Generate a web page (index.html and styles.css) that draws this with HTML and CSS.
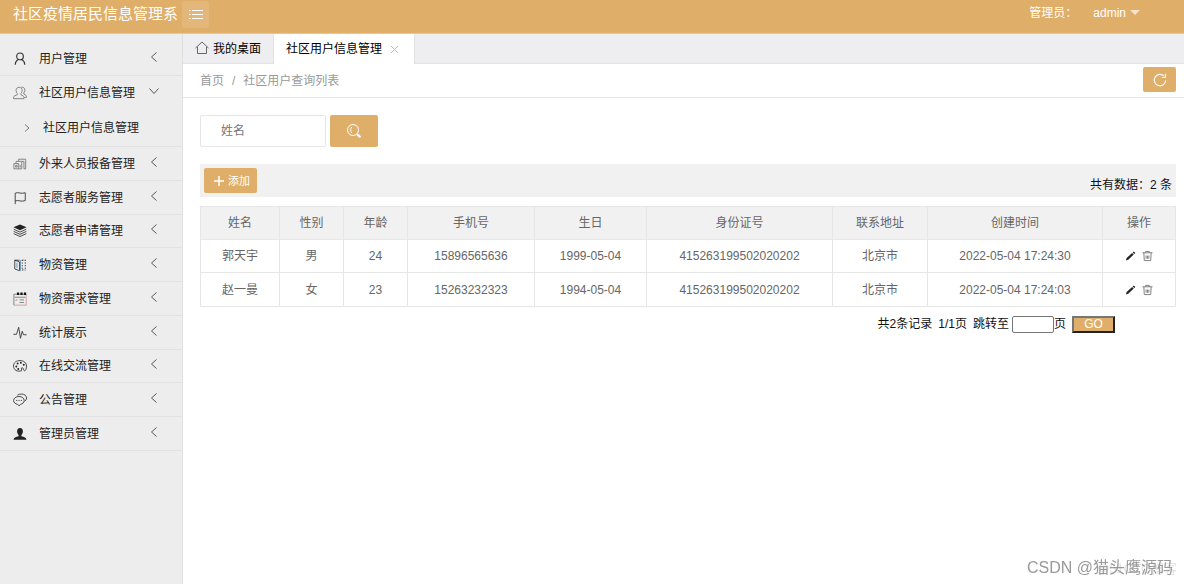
FILE: index.html
```html
<!DOCTYPE html>
<html lang="zh-CN">
<head>
<meta charset="utf-8">
<title>社区疫情居民信息管理系统</title>
<link rel="stylesheet" href="styles.css">
</head>
<body>
<header class="header">
  <div class="logo">社区疫情居民信息管理系</div>
  <button class="toggle" type="button" aria-label="折叠菜单">
    <svg width="16" height="12" viewBox="0 0 16 12" fill="none" stroke="currentColor"><path d="M4 1.500h11M4 5.500h11M4 9.500h11M1 1.500h1.500M1 5.500h1.500M1 9.500h1.500"/></svg>
  </button>
  <div class="account"><span>管理员：</span><button class="user" type="button">admin<span class="caret"></span></button></div>
</header>
<div class="body">
  <nav class="side">
    <ul class="menu">
      <li><a class="item" href="#"><svg class="ic" viewBox="0 0 16 16"><g stroke-width="1.300"><circle cx="8" cy="5" r="3.800"/><path d="M2.500 14.500c.2-3 1.500-5 3.500-6M10 8.500c2 1 3.300 3 3.500 6"/></g></svg><span>用户管理</span><svg class="arrow" viewBox="0 0 10 10"><path d="M7.500.5 2.500 5l5 4.500"/></svg></a></li>
      <li class="open"><a class="item" href="#"><svg class="ic light" viewBox="0 0 16 16"><path d="M7 1.500c-2.200 0-3.500 1.500-3.500 3.700 0 1.500.7 2.600 1.500 3.300v1.300L1.500 11.500C.6 12 .6 13 .6 14.500h12c0-1.500 0-2.500-.9-3L9 9.800V8.500c.8-.7 1.500-1.800 1.500-3.300C10.500 3 9.200 1.500 7 1.500ZM9.500 1.300c2.500-.4 4.100 1.300 4.100 3.500 0 1.400-.5 2.400-1.300 3.200v1.200l2.300 1.300c.9.500.9 1.500.9 2.500h-2.500"/></svg><span>社区用户信息管理</span><svg class="arrow" viewBox="0 0 10 10"><path d="M.5 2.500 5 7.500l4.500-5"/></svg></a>
        <ul class="sub"><li><a class="subitem" href="#"><svg class="tiny" viewBox="0 0 8 8"><path d="m2 .5 4 3.500-4 3.500"/></svg><span>社区用户信息管理</span></a></li></ul></li>
      <li><a class="item" href="#"><svg class="ic light" viewBox="0 0 16 16"><path d="M1 13.500V7.500h5.500v6ZM3.500 7.500V5H10v8.500H6.500M6.500 5V2.500h8v11H12.500V5H10M3 9.500h1.800v2H3zM8.200 9v3"/></svg><span>外来人员报备管理</span><svg class="arrow" viewBox="0 0 10 10"><path d="M7.500.5 2.500 5l5 4.500"/></svg></a></li>
      <li><a class="item" href="#"><svg class="ic" viewBox="0 0 16 16"><path d="M2.500 15V2.500c3.500-2 6.500 1.500 11.500-.5v9c-5 2-8-1.500-11.500.5"/></svg><span>志愿者服务管理</span><svg class="arrow" viewBox="0 0 10 10"><path d="M7.500.5 2.500 5l5 4.500"/></svg></a></li>
      <li><a class="item" href="#"><svg class="ic" viewBox="0 0 16 16"><path class="solid" d="m8 .5 7.500 3.200L8 7.200.5 3.700Z"/><path d="m.8 6 7.200 3.300L15.200 6M.8 8.500 8 11.800l7.200-3.300M.8 11 8 14.300l7.200-3.300"/></svg><span>志愿者申请管理</span><svg class="arrow" viewBox="0 0 10 10"><path d="M7.500.5 2.500 5l5 4.500"/></svg></a></li>
      <li><a class="item" href="#"><svg class="ic" viewBox="0 0 16 16"><path d="M2 2.500v10l5.500 2V4.500L2 2.500h5.500"/><path class="blue" d="M4.500 5.500v6M8.500 2.500v12"/><path stroke-dasharray="1.500 1.500" d="M10.500 2v12.500M14 2v12.500M10.500 2.500H14M10.500 13.500H14"/></svg><span>物资管理</span><svg class="arrow" viewBox="0 0 10 10"><path d="M7.500.5 2.500 5l5 4.500"/></svg></a></li>
      <li><a class="item" href="#"><svg class="ic light" viewBox="0 0 16 16"><path d="M1 15V2.500h14M2 6h12M7.500 9h5M7.500 12h5"/><path class="red" d="M15 2.500V15H1M2.500 9.500h2v-1.500"/><path class="dots" d="M4.500 2h2.500M8.500 2H11M12.500 2H15"/></svg><span>物资需求管理</span><svg class="arrow" viewBox="0 0 10 10"><path d="M7.500.5 2.500 5l5 4.500"/></svg></a></li>
      <li><a class="item" href="#"><svg class="ic" viewBox="0 0 16 16"><path d="M.5 9.500H4l2.500-8L8.500 14l2-8 1.500 4h3.500"/></svg><span>统计展示</span><svg class="arrow" viewBox="0 0 10 10"><path d="M7.500.5 2.500 5l5 4.500"/></svg></a></li>
      <li><a class="item" href="#"><svg class="ic" viewBox="0 0 16 16"><path d="M9.500 13.500C5 15 .6 12.500.6 8.200S4 1.800 8 1.800c4.500 0 7.400 2.700 7.400 6.200 0 3-.9 5.500-2.200 5.500-1.500 0-.7-3.500-2.700-3.500-2.300 0 .5 2.700-1 3.500Z"/><g class="solid"><circle cx="3.800" cy="8.500" r="1.100"/><circle cx="5.300" cy="5.200" r="1.100"/><circle cx="9" cy="4.300" r="1.100"/><circle cx="12.300" cy="6.500" r="1.100"/><circle cx="6" cy="11.500" r="1.100"/></g></svg><span>在线交流管理</span><svg class="arrow" viewBox="0 0 10 10"><path d="M7.500.5 2.500 5l5 4.500"/></svg></a></li>
      <li><a class="item" href="#"><svg class="ic" viewBox="0 0 16 16"><path d="M6.800 4c3.500 0 6 2 6 4.500S10.800 12.500 8.500 13L7 14.800 5.300 13C2.500 12.500.7 10.800.7 8.500.7 6 3.300 4 6.800 4ZM5 2.500C6.300 1.600 8 1.200 9.700 1.200c3.500 0 5.800 2 5.800 4.500 0 1.600-.9 3-2.300 3.800M3.500 8.500h1.300M6.200 8.500h1.300M8.900 8.500h1.300"/></svg><span>公告管理</span><svg class="arrow" viewBox="0 0 10 10"><path d="M7.500.5 2.500 5l5 4.500"/></svg></a></li>
      <li><a class="item" href="#"><svg class="ic" viewBox="0 0 16 16"><path class="solid" d="M8 1c2.300 0 3.300 1.500 3.300 3.800 0 1.800-.8 3.400-1.700 4.200v1.500c3.300.7 5.700 1.500 5.700 4H.7c0-2.500 2.400-3.300 5.700-4V9C5.500 8.200 4.700 6.600 4.700 4.800 4.700 2.500 5.700 1 8 1Z"/></svg><span>管理员管理</span><svg class="arrow" viewBox="0 0 10 10"><path d="M7.500.5 2.500 5l5 4.500"/></svg></a></li>
    </ul>
  </nav>
  <main class="main">
    <div class="tabs">
      <a class="tab" href="#"><svg class="home" viewBox="0 0 14 14"><path d="M.5 7 7 1l6.500 6M2.500 6v6.500h9V6"/></svg>我的桌面</a>
      <div class="tab active"><a href="#">社区用户信息管理</a><button class="close" type="button" aria-label="关闭"><svg width="9" height="9" viewBox="0 0 9 9" fill="none" stroke="currentColor"><path d="m1 1 7 7M8 1 1 8"/></svg></button></div>
    </div>
    <div class="crumbs">
      <a href="#">首页</a><span>/</span><a href="#">社区用户查询列表</a>
      <button class="refresh" type="button" aria-label="刷新"><svg width="14" height="14" viewBox="0 0 14 14" fill="none" stroke="currentColor" stroke-width="1.200"><path d="M12.700 7.500A5.700 5.700 0 1 1 11 3M12.500.8v3.700H8.800"/></svg></button>
    </div>
    <div class="content">
      <form class="search">
        <input class="name" type="text" placeholder="姓名" aria-label="姓名">
        <button class="find" type="button" aria-label="搜索"><svg width="16" height="16" viewBox="0 0 16 16" fill="none" stroke="currentColor"><circle cx="7" cy="7" r="5.500"/><path d="M5.800 4C4.300 5 4.300 8.500 5.800 10"/><path stroke-width="2.200" d="m11.200 11.200 3.300 3"/></svg></button>
      </form>
      <div class="bar">
        <button class="add" type="button"><svg width="10" height="10" viewBox="0 0 10 10" fill="none" stroke="currentColor" stroke-width="1.500"><path d="M5 0v10M0 5h10"/></svg>添加</button>
        <span class="count">共有数据：2 条</span>
      </div>
      <table class="grid">
        <colgroup><col class="c1"><col class="c2"><col class="c2"><col class="c4"><col class="c5"><col class="c6"><col class="c7"><col class="c8"><col class="c9"></colgroup>
        <thead><tr><th>姓名</th><th>性别</th><th>年龄</th><th>手机号</th><th>生日</th><th>身份证号</th><th>联系地址</th><th>创建时间</th><th>操作</th></tr></thead>
        <tbody>
          <tr><td>郭天宇</td><td>男</td><td>24</td><td>15896565636</td><td>1999-05-04</td><td>415263199502020202</td><td>北京市</td><td>2022-05-04 17:24:30</td><td><div class="ops"><button type="button" aria-label="编辑"><svg viewBox="0 0 12 12"><path class="pen" d="m1 11 .8-2.700 6-5.600 1.700 1.700-6 5.600ZM8.400 2.100l1.200-1.100 1.700 1.700-1.200 1.100Z"/></svg></button><button type="button" aria-label="删除"><svg viewBox="0 0 12 12"><path class="bin" d="M.5 2.500h11M4 2.500V1h4v1.500M2 2.500l.5 8.500h7l.5-8.500M4.500 5.500v3.500M6 5.500v3.500M7.500 5.500v3.500"/></svg></button></div></td></tr>
          <tr><td>赵一曼</td><td>女</td><td>23</td><td>15263232323</td><td>1994-05-04</td><td>415263199502020202</td><td>北京市</td><td>2022-05-04 17:24:03</td><td><div class="ops"><button type="button" aria-label="编辑"><svg viewBox="0 0 12 12"><path class="pen" d="m1 11 .8-2.700 6-5.600 1.700 1.700-6 5.600ZM8.400 2.100l1.200-1.100 1.700 1.700-1.200 1.100Z"/></svg></button><button type="button" aria-label="删除"><svg viewBox="0 0 12 12"><path class="bin" d="M.5 2.500h11M4 2.500V1h4v1.500M2 2.500l.5 8.500h7l.5-8.500M4.500 5.500v3.500M6 5.500v3.500M7.500 5.500v3.500"/></svg></button></div></td></tr>
        </tbody>
      </table>
      <form class="pager">
        <span>共2条记录</span><span>1/1页</span>
        <label class="jump">跳转至<input type="text">页</label>
        <button class="go" type="button">GO</button>
      </form>
    </div>
  </main>
</div>
<div class="mark ghost">@51CTO博客</div>
<div class="mark">CSDN @猫头鹰源码</div>
</body>
</html>
```
FILE: styles.css
```css
* { box-sizing: border-box; }
body {
  margin: 0;
  min-height: 100vh;
  display: flex;
  flex-direction: column;
  font: 12px/18px "Liberation Sans", "Noto Sans CJK SC", sans-serif;
  color: #111;
  background: #fff;
}
a { color: inherit; text-decoration: none; }
button, input { font: inherit; color: inherit; }
button { padding: 0; border: 0; background: none; cursor: pointer; }
ul { margin: 0; padding: 0; list-style: none; }

.header {
  display: flex;
  align-items: flex-start;
  height: 34px;
  padding-left: 13px;
  background: #dfae69;
  border-bottom: 1px solid #e3c79d;
  color: #fff;
}
.logo { width: 169px; font-size: 15px; line-height: 27px; white-space: nowrap; }
.toggle {
  display: flex;
  align-items: center;
  justify-content: center;
  width: 27px;
  height: 27px;
  margin-top: 1px;
  border-radius: 2px;
  background: #e3b67a;
}
.account {
  display: flex;
  gap: 16px;
  margin-left: auto;
  padding-right: 44px;
  line-height: 27px;
}
.user { display: flex; gap: 4px; line-height: 27px; }
.caret {
  margin-top: 10px;
  border: 5px solid transparent;
  border-top-color: #f5e4cb;
  border-bottom: 0;
}

.body { flex: 1; display: flex; }
.side {
  width: 183px;
  padding-top: 8px;
  background: #ededed;
  border-right: 1px solid #e0e0e0;
}
.menu > li { border-bottom: 1px solid #e2e2e2; }
.item {
  display: flex;
  align-items: center;
  height: 33px;
  padding: 0 23px 0 13px;
  color: #222;
}
.menu > li:nth-child(4n + 1):not(:first-child) .item { height: 32px; }
.ic {
  width: 14px;
  height: 14px;
  margin-right: 12px;
  fill: none;
  stroke: #333;
}
.light { stroke: #777; }
.solid { fill: #222; stroke: none; }
.blue { stroke: #5d8fb5; }
.red { stroke: #c99; }
.dots { stroke: #111; stroke-width: 3; }
.arrow {
  width: 10px;
  height: 10px;
  margin: 0 0 4px auto;
  fill: none;
  stroke: #555;
}
.subitem {
  display: flex;
  align-items: center;
  gap: 12px;
  height: 37px;
  padding-left: 23px;
  color: #222;
}
.tiny { width: 8px; height: 8px; fill: none; stroke: #777; }

.main { flex: 1; min-width: 0; }
.tabs {
  display: flex;
  height: 30px;
  background: #eeeef0;
  border-bottom: 1px solid #e2e2e4;
  color: #000;
}
.tab {
  display: flex;
  align-items: center;
  gap: 4px;
  height: 30px;
  padding: 0 12px;
  border-right: 1px solid #e2e2e4;
}
.active { gap: 5px; background: #fff; }
.home { width: 14px; height: 14px; margin-bottom: 2px; fill: none; stroke: #666; }
.close { display: flex; padding: 3px; color: #bbb; }
.crumbs {
  display: flex;
  align-items: center;
  gap: 8px;
  height: 34px;
  padding: 0 8px 0 17px;
  border-bottom: 1px solid #e5e5e5;
  color: #999;
}
.refresh, .find {
  display: flex;
  align-items: center;
  justify-content: center;
  border-radius: 2px;
  background: #dfae69;
  color: #fff;
}
.refresh { width: 33px; height: 25px; margin: 0 0 2px auto; }

.content { padding: 17px 8px 17px 17px; }
.search { display: flex; gap: 4px; margin-bottom: 17px; }
.name {
  width: 126px;
  height: 32px;
  padding: 0 20px;
  border: 1px solid #e6e6e6;
  border-radius: 2px;
  outline: 0;
}
.name::placeholder { color: #757575; opacity: 1; }
.find { width: 48px; height: 32px; }
.bar {
  display: flex;
  align-items: center;
  justify-content: space-between;
  height: 33px;
  margin-bottom: 9px;
  padding: 0 4px;
  background: #f1f1f1;
}
.add {
  display: flex;
  align-items: center;
  gap: 4px;
  height: 25px;
  padding: 0 7px 0 10px;
  border-radius: 2px;
  background: #dfae69;
  color: #fff;
  font-size: 11px;
}
.count { padding-top: 8px; }

.grid {
  width: 100%;
  table-layout: fixed;
  border-collapse: collapse;
  color: #666;
  text-align: center;
}
.grid th, .grid td { height: 33px; padding: 0; border: 1px solid #e6e6e6; font-weight: 400; }
.grid tr:last-child td { height: 34px; }
.grid th { background: #f1f1f1; }
.c1 { width: 79px; }
.c2 { width: 64px; }
.c4 { width: 127px; }
.c5 { width: 112px; }
.c6 { width: 186px; }
.c7 { width: 95px; }
.c8 { width: 175px; }
.c9 { width: 73px; }
.ops { display: flex; justify-content: center; gap: 6px; }
.ops button { display: flex; }
.ops svg { width: 11px; height: 12px; fill: none; }
.pen { fill: #222; }
.bin { stroke: #777; }

.pager {
  display: flex;
  align-items: center;
  justify-content: flex-end;
  gap: 6px;
  padding: 8px 61px 0 0;
}
.jump { display: flex; align-items: center; }
.jump input {
  width: 42px;
  height: 17px;
  margin-left: 3px;
  padding: 0 2px;
  border: 1px solid #767676;
  border-radius: 2px;
}
.go {
  width: 43px;
  height: 17px;
  border: 2px outset #767676;
  background: #dfae69;
  color: #fff;
  line-height: 13px;
}

.mark {
  position: fixed;
  right: 11px;
  bottom: 4px;
  font-size: 16px;
  line-height: 24px;
  color: #999;
}
.ghost { right: 7px; bottom: 3px; font-size: 13px; color: #e2e2e2; }
```
